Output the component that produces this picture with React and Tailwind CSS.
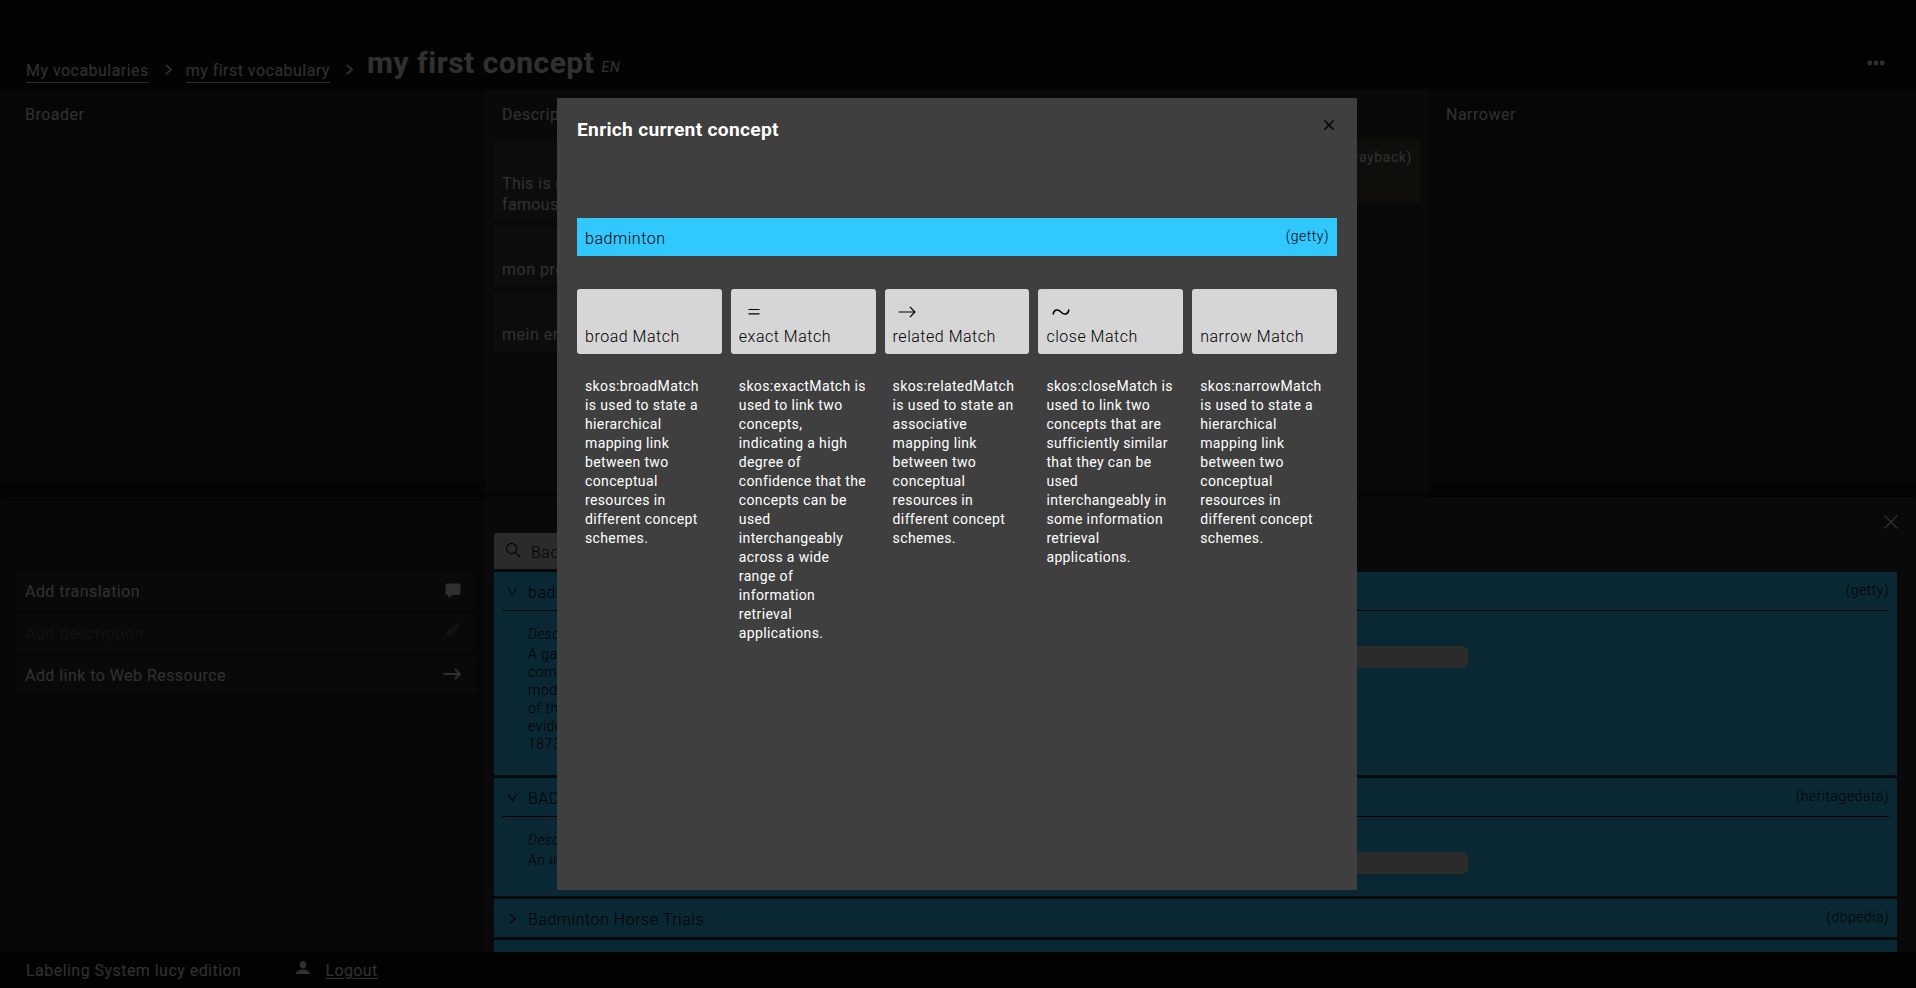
const chip = "flex flex-col justify-end rounded-[3px] bg-[#d6d6d6] px-2";

function Chevron({ dir = "right", w = 1.6, className = "" }) {
  const d = dir === "right" ? "M3 1 L9 6 L3 11" : "M1.5 2.5 L6 9.5 L10.5 2.5";
  return (
    <svg viewBox="0 0 12 12" className={className} fill="none" stroke="currentColor" strokeWidth={w}>
      <path d={d} />
    </svg>
  );
}

function Arrow({ w = 1.5, className = "" }) {
  return (
    <svg viewBox="0 0 18 12" className={className} fill="none" stroke="currentColor" strokeWidth={w}>
      <path d="M0.5 6 H17 M12 1 L17 6 L12 11" />
    </svg>
  );
}

function Header() {
  return (
    <header className="flex h-[89px] items-start bg-[#0f0f0f] pl-[26px] pr-[31px]">
      <a className="mt-[60px] h-[23px] border-b border-[#e0e0e0] leading-[21px] tracking-[0.46px]">My vocabularies</a>
      <Chevron className="ml-[14px] mt-[64px] size-[11px]" w={1.8} />
      <a className="ml-[12px] mt-[60px] h-[23px] border-b border-[#e0e0e0] leading-[21px] tracking-[0.47px]">my first vocabulary</a>
      <Chevron className="ml-[14px] mt-[64px] size-[11px]" w={1.8} />
      <h1 className="ml-[12px] mt-[45px] text-[30px] font-bold leading-[36px]">my first concept</h1>
      <span className="ml-[7px] mt-[58px] text-[14px] italic leading-[18px] tracking-[0.9px]">EN</span>
      <svg viewBox="0 0 18 6" className="ml-auto mt-[60px] h-[6px] w-[18px]" fill="currentColor">
        <circle cx="2.7" cy="3" r="2.4" />
        <circle cx="9" cy="3" r="2.4" />
        <circle cx="15.3" cy="3" r="2.4" />
      </svg>
    </header>
  );
}

function Labels() {
  return (
    <section className="flex h-[408px]">
      <div className="w-[485px] bg-[#1e1e1e] pl-[25px] pt-[15px] leading-[22px]">Broader</div>
      <div className="w-[944px] bg-[#313131] px-[9px] pt-[15px]">
        <div className="pl-2 leading-[22px]">Description</div>
        <div className="mt-[13px] flex gap-[10px]">
          <div className="flex flex-1 flex-col gap-[3px]">
            <div className="flex h-[83px] items-end bg-[#3c3c3c] px-2 pb-[7px] leading-[21px] tracking-[0.35px]">
              <p>This is my<br />famous</p>
            </div>
            <div className="flex h-[62px] items-end bg-[#3c3c3c] px-2 pb-[7px] leading-[21px]">mon premier</div>
            <div className="flex h-[62px] items-end bg-[#3c3c3c] px-2 pb-[7px] leading-[21px]">mein erstes</div>
          </div>
          <div className="h-[62px] flex-1 bg-[#4b4632] px-2 pt-2 text-right text-[14px] leading-[20px] tracking-[0.6px]">(wayback)</div>
        </div>
      </div>
      <div className="flex-1 bg-[#1e1e1e] pl-[17px] pt-[15px] leading-[22px]">Narrower</div>
    </section>
  );
}

function Action({ label, dim, children }) {
  return (
    <div className={"flex h-[38px] items-center justify-between rounded-[3px] bg-[#2d2d2d] pl-2 pr-[15px] " + (dim ? "text-[#5a5a5a]" : "")}>
      <span className="mt-[2px] tracking-[0.45px]">{label}</span>
      {children}
    </div>
  );
}

function Result({ title, source, open, className, children }) {
  return (
    <div className={"bg-[#30c8ff] px-2 text-black " + className}>
      <div className={"flex h-[39px] " + (open ? "border-b border-black" : "")}>
        <Chevron dir={open ? "down" : "right"} className="ml-[5px] mt-[14px] size-[11px]" w={1.1} />
        <span className="ml-[10px] mt-[10px] font-light leading-[22px] tracking-[0.53px]">{title}</span>
        <span className="ml-auto mt-[8px] text-[14px] font-light leading-[20px]">{source}</span>
      </div>
      {open && (
        <div className="flex justify-between">
          <div className="w-[600px] pl-[26px] pt-[14px] text-[14px] font-light leading-[18px]">
            <p className="mb-[2px] italic">Description</p>
            {children}
          </div>
          <div className="mr-[421px] mt-[35px] h-[22px] w-[300px] rounded-[6px] bg-[#d6d6d6]" />
        </div>
      )}
    </div>
  );
}

function Enrich() {
  return (
    <section className="relative flex h-[455px] shadow-[0_-2px_8px_rgba(0,0,0,0.9)]">
      <div className="flex w-[485px] flex-col gap-1 bg-[#1e1e1e] pl-[17px] pr-[9px] pt-[75px]">
        <Action label="Add translation">
          <svg viewBox="0 0 16 16" className="size-4" fill="currentColor">
            <path d="M2.5 0.5 H13.5 Q15.5 0.5 15.5 2.5 V10 Q15.5 12 13.5 12 H7 L3.5 15.5 V12 H2.5 Q0.5 12 0.5 10 V2.5 Q0.5 0.5 2.5 0.5Z" />
          </svg>
        </Action>
        <Action label="Add description" dim>
          <svg viewBox="0 0 18 18" className="mb-[3px] h-[18px] w-[18px]" fill="currentColor">
            <path d="M18 0 C13 0.6 7 4 4.6 8.5 C3.8 10 3.4 11.5 3 13 L0 17.5 L0.8 18 L3.8 13.8 C6 13.8 8 13.3 9.5 12.2 L7.6 12 C9.6 11.6 11 11 12 9.8 L10.2 9.6 C12 9.1 13.4 8.3 14.2 7.1 L12.4 7 C14.2 6.3 15.4 5.4 16 4 L14.6 3.9 C16.4 3.2 17.4 1.8 18 0Z" />
          </svg>
        </Action>
        <Action label="Add link to Web Ressource">
          <Arrow className="mb-[3px] h-[12px] w-[18px]" w={1.8} />
        </Action>
      </div>
      <div className="flex-1 overflow-hidden bg-[#313131] pl-[9px] pr-[19px]">
        <div className="flex h-9 justify-end pt-[18px]">
          <svg viewBox="0 0 14 14" className="-mr-px size-[14px]" fill="none" stroke="currentColor" strokeWidth="1.2">
            <path d="M0.5 0.5 L13.5 13.5 M13.5 0.5 L0.5 13.5" />
          </svg>
        </div>
        <div className="flex h-9 w-[700px] items-center rounded-t-[3px] bg-[#d6d6d6] pl-3 text-black">
          <svg viewBox="0 0 16 16" className="mb-px size-[15px]" fill="none" stroke="currentColor" strokeWidth="1.1">
            <circle cx="6" cy="6" r="5.4" />
            <path d="M9.8 9.8 L15.3 15.3" />
          </svg>
          <span className="ml-[10px] mt-[3px] font-light">Badminton</span>
        </div>
        <div className="mt-[3px] flex flex-col gap-[3px]">
          <Result open title="badminton" source="(getty)" className="h-[203px]">
            <p>A game<br />commonly<br />modern<br />of the<br />evidence<br />1873</p>
          </Result>
          <Result open title="BADMINTON" source="(heritagedata)" className="h-[118px]">
            <p>An indoor</p>
          </Result>
          <Result title="Badminton Horse Trials" source="(dbpedia)" className="h-[38px]" />
          <div className="h-[38px] bg-[#30c8ff]" />
        </div>
      </div>
    </section>
  );
}

function Footer() {
  return (
    <footer className="relative flex h-9 items-start bg-[#0a0a0a] pl-[26px]">
      <span className="mt-2 leading-[22px] tracking-[0.46px]">Labeling System lucy edition</span>
      <svg viewBox="0 0 14 13" className="ml-[55px] mt-[9px] h-[13px] w-[14px]" fill="currentColor">
        <ellipse cx="7" cy="3.7" rx="3.1" ry="3.7" />
        <path d="M0 13 C0 9.8 3 9.2 5.2 8.4 H8.8 C11 9.2 14 9.8 14 13Z" />
      </svg>
      <a className="ml-[15px] mt-2 leading-[22px] tracking-[0.4px] underline underline-offset-2">Logout</a>
    </footer>
  );
}

const mappingLink = ["mapping link", "between two", "conceptual", "resources in", "different concept", "schemes."];

const matches = [
  { name: "broad Match", lines: ["skos:broadMatch", "is used to state a", "hierarchical", ...mappingLink] },
  {
    name: "exact Match",
    icon: "equal",
    lines: ["skos:exactMatch is", "used to link two", "concepts,", "indicating a high", "degree of", "confidence that the", "concepts can be", "used", "interchangeably", "across a wide", "range of", "information", "retrieval", "applications."],
  },
  { name: "related Match", icon: "arrow", lines: ["skos:relatedMatch", "is used to state an", "associative", ...mappingLink] },
  {
    name: "close Match",
    icon: "tilde",
    lines: ["skos:closeMatch is", "used to link two", "concepts that are", "sufficiently similar", "that they can be", "used", "interchangeably in", "some information", "retrieval", "applications."],
  },
  { name: "narrow Match", lines: ["skos:narrowMatch", "is used to state a", "hierarchical", ...mappingLink] },
];

function MatchIcon({ icon }) {
  if (!icon) return null;
  if (icon === "arrow") return <Arrow className="mb-2 ml-[5px] h-[12px] w-[18px]" w={1.1} />;
  return (
    <svg viewBox="0 0 18 12" className="mb-2 ml-[6px] h-[12px] w-[18px]" fill="none" stroke="currentColor" strokeWidth="1.2">
      {icon === "equal" ? <path d="M3.5 3.5 H14.5 M3.5 7.9 H14.5" /> : <path strokeWidth="1.5" d="M1 8.5 C2 3 6 2.8 9 6 C12 9.2 16 9 17 3.5" />}
    </svg>
  );
}

function Dialog() {
  return (
    <div className="flex h-[792px] w-[800px] flex-col bg-[#3f3f3f] px-5 text-white">
      <div className="flex h-[120px] justify-between">
        <h2 className="mt-[19px] text-[19.2px] font-bold leading-[26px] tracking-[0.29px]">Enrich current concept</h2>
        <svg viewBox="0 0 10 10" className="mr-[3px] mt-[22px] size-[10px]" fill="none" stroke="#000" strokeWidth="1.5">
          <path d="M0.5 0.5 L9.5 9.5 M9.5 0.5 L0.5 9.5" />
        </svg>
      </div>
      <div className="flex h-[38px] justify-between bg-[#30c8ff] px-2 text-black">
        <span className="mt-[10px] font-light leading-[22px] tracking-[0.55px]">badminton</span>
        <span className="mt-[8px] text-[14px] font-light leading-[20px]">(getty)</span>
      </div>
      <div className="mt-[33px] grid grid-cols-5 gap-[9px]">
        {matches.map((m) => (
          <div key={m.name}>
            <button className={chip + " h-[65px] w-full items-start pb-[6px] text-black"}>
              <MatchIcon icon={m.icon} />
              <span className="font-light leading-[22px] tracking-[0.52px]">{m.name}</span>
            </button>
            <p className="mt-[23px] whitespace-pre pl-2 text-[14px] leading-[19px] tracking-[0.37px]">{m.lines.join("\n")}</p>
          </div>
        ))}
      </div>
    </div>
  );
}

export default function App() {
  return (
    <div className="h-[988px] w-[1916px] overflow-hidden bg-black font-['Roboto',sans-serif] text-[16px] tracking-[0.5px] text-[#f0f0f0]">
      <Header />
      <Labels />
      <Enrich />
      <Footer />
      <div className="fixed inset-0 flex items-center justify-center bg-black/80 pr-[2px]">
        <Dialog />
      </div>
    </div>
  );
}
